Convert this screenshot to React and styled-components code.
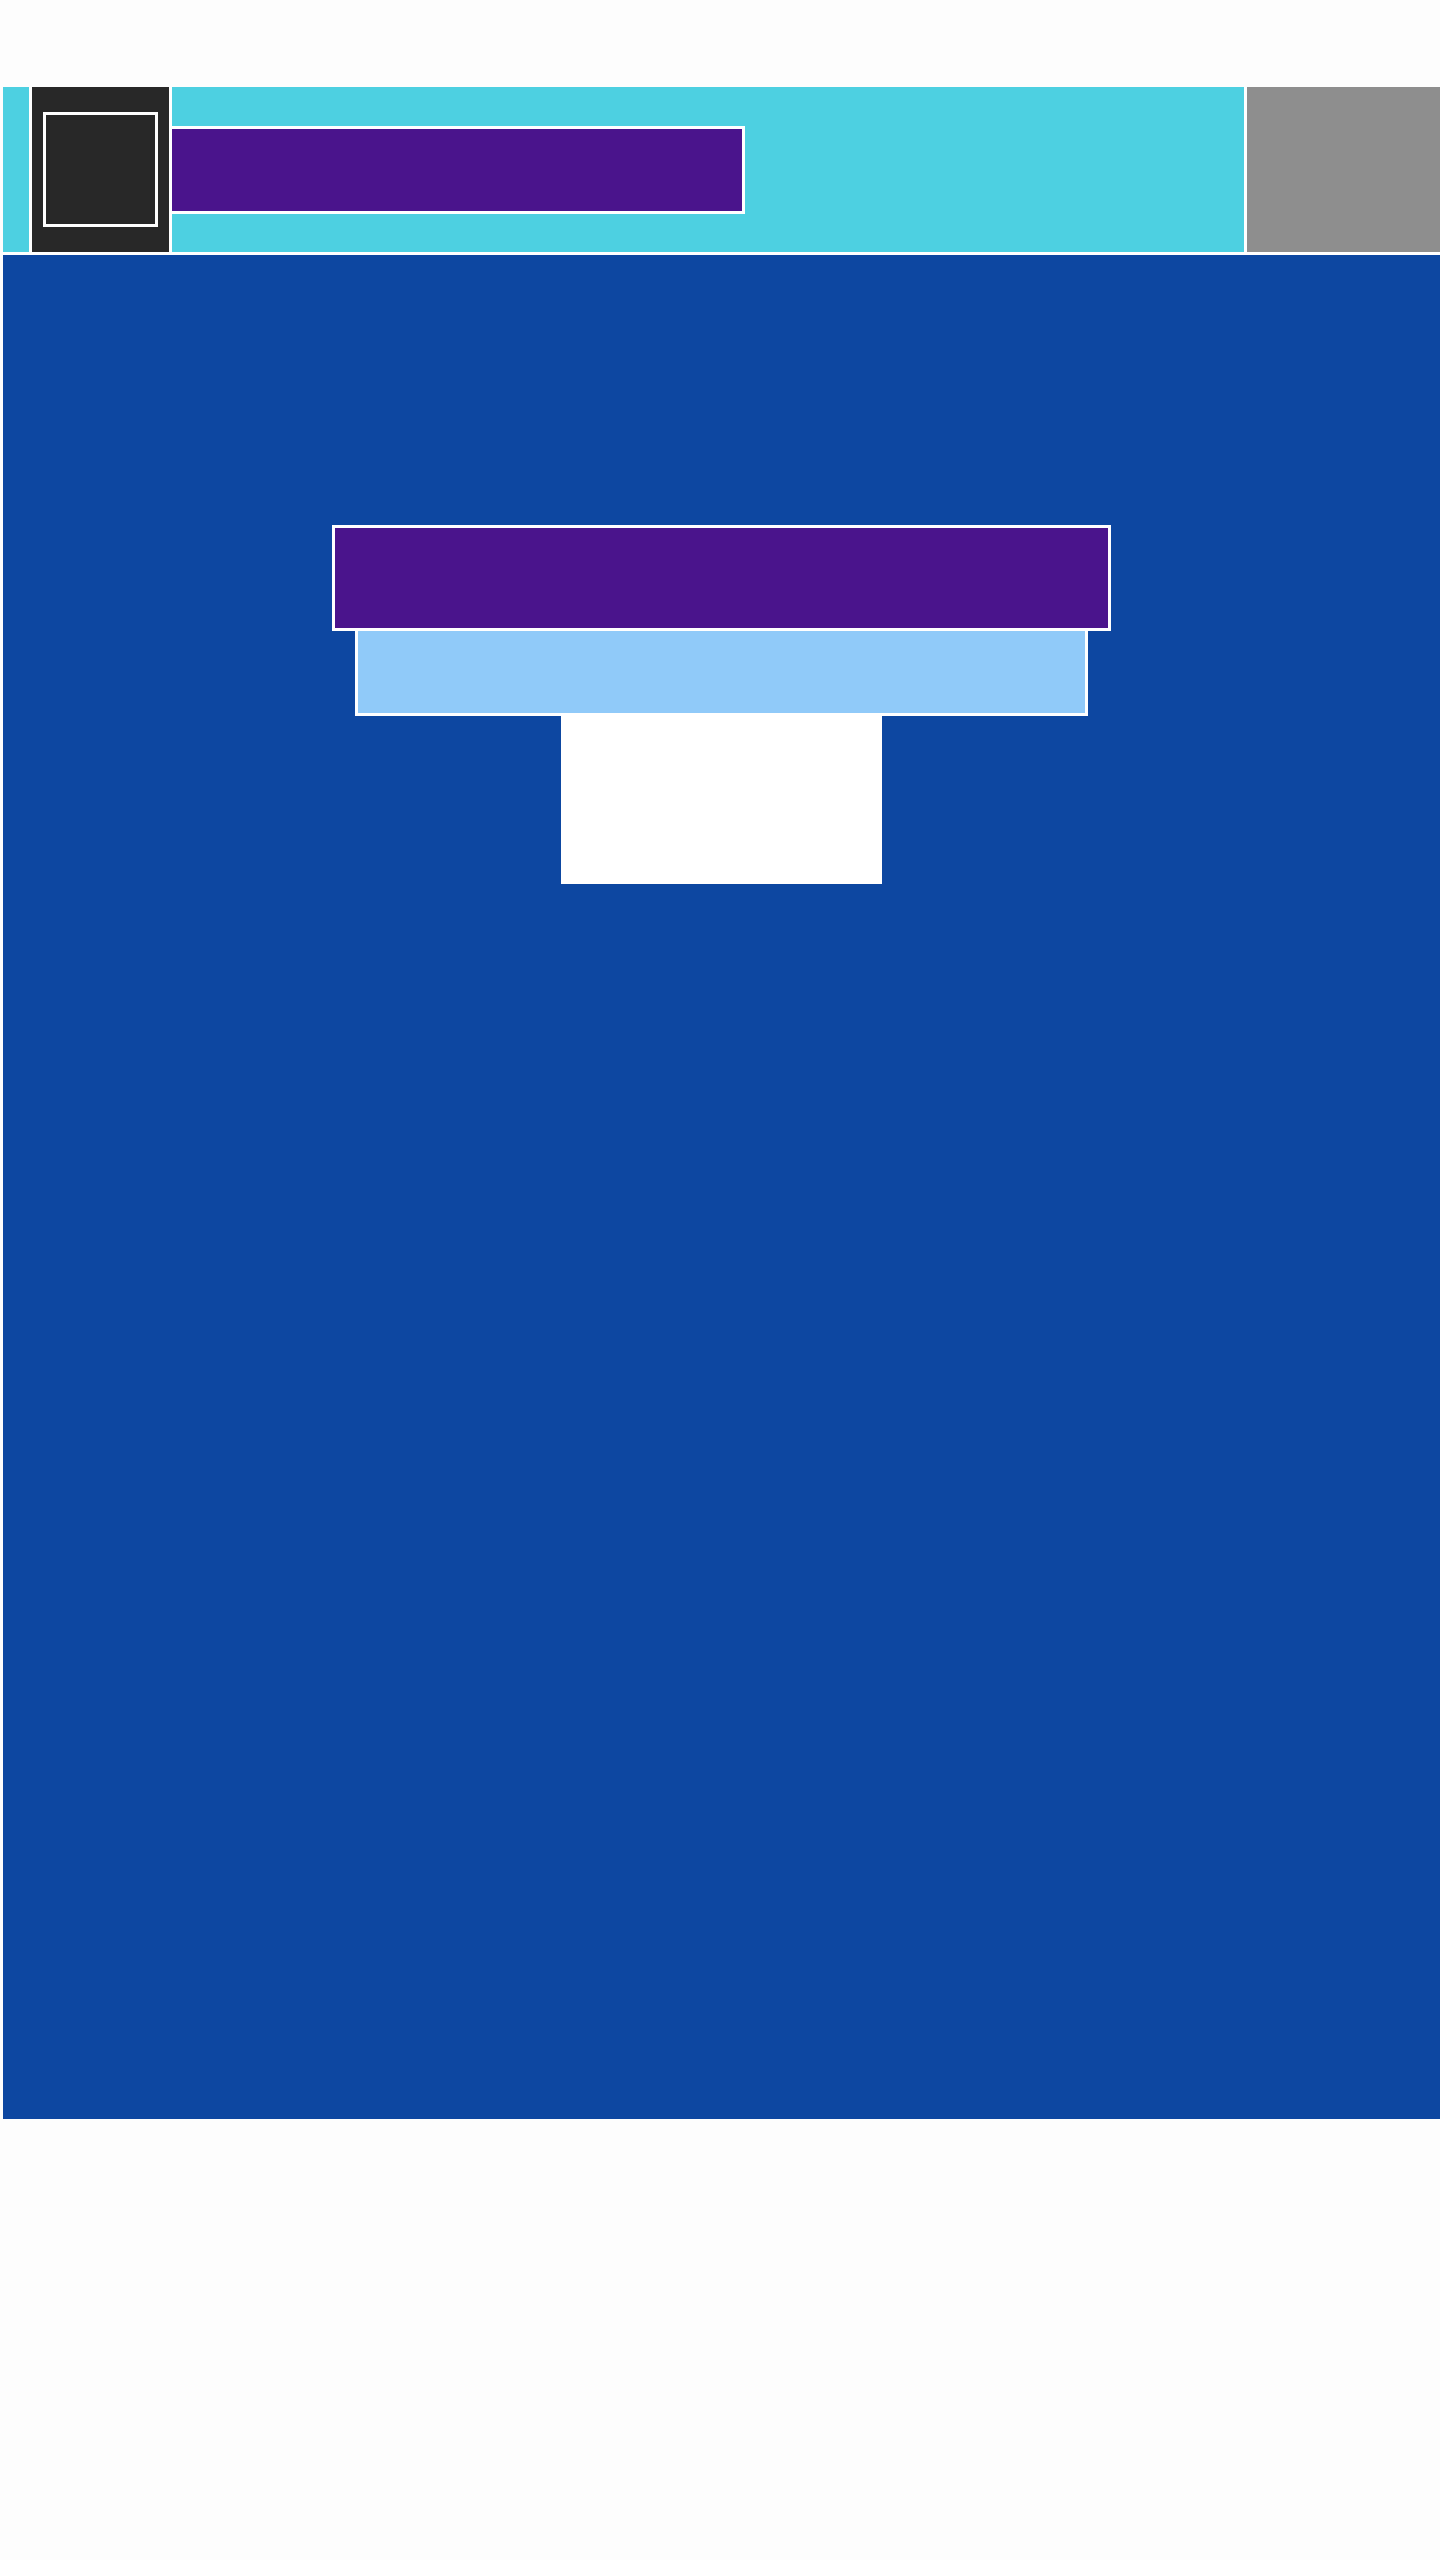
import React from 'react'
import styled, { createGlobalStyle } from 'styled-components'

const GlobalStyle = createGlobalStyle`
  html, body {
    margin: 0;
    padding: 0;
    background: #FDFDFD;
    font-family: 'Liberation Sans', Arial, sans-serif;
  }
`

const Page = styled.div`
  width: 1440px;
  min-height: 2560px;
  padding: 87px 0 0 3px;
  box-sizing: border-box;
  overflow: hidden;
  background: #FDFDFD;
`

const Header = styled.header`
  display: flex;
  align-items: stretch;
  height: 168px;
  background: #4DD0E1;
  border-bottom: 3px solid #FFFFFF;
  box-sizing: border-box;
`

const LogoColumn = styled.div`
  display: flex;
  align-items: center;
  justify-content: center;
  width: 143px;
  margin-left: 26px;
  background: #282828;
  border-left: 3px solid #FFFFFF;
  border-right: 3px solid #FFFFFF;
  box-sizing: border-box;
`

const LogoFrame = styled.div`
  width: 115px;
  height: 115px;
  border: 3px solid #FFFFFF;
  box-sizing: border-box;
`

const TitleBar = styled.div`
  align-self: center;
  width: 573px;
  height: 88px;
  background: #4A148C;
  border: 3px solid #FFFFFF;
  border-left: none;
  box-sizing: border-box;
`

const Spacer = styled.div`
  flex: 1;
`

const SidePanel = styled.div`
  width: 196px;
  background: #8E8E8E;
  border-left: 3px solid #FFFFFF;
  box-sizing: border-box;
`

const Main = styled.main`
  height: 1864px;
  background: #0D47A1;
`

const Stage = styled.div`
  display: flex;
  flex-direction: column;
  align-items: center;
  padding-top: 270px;
`

const Block = styled.div`
  width: ${p => p.w}px;
  height: ${p => p.h}px;
  background: ${p => p.bg};
  border: ${p => p.edge ?? 3}px solid #FFFFFF;
  border-top-width: ${p => p.top ?? 3}px;
  border-bottom-width: ${p => p.bottom ?? 3}px;
  box-sizing: border-box;
`

export default function App() {
  return (
    <>
      <GlobalStyle />
      <Page>
        <Header>
          <LogoColumn>
            <LogoFrame />
          </LogoColumn>
          <TitleBar />
          <Spacer />
          <SidePanel />
        </Header>
        <Main>
          <Stage>
            <Block w={779} h={106} bg='#4A148C' />
            <Block w={733} h={85} bg='#90CAF9' top={0} />
            <Block w={321} h={168} bg='#FFFFFF' edge={0} top={0} bottom={0} />
          </Stage>
        </Main>
      </Page>
    </>
  )
}
